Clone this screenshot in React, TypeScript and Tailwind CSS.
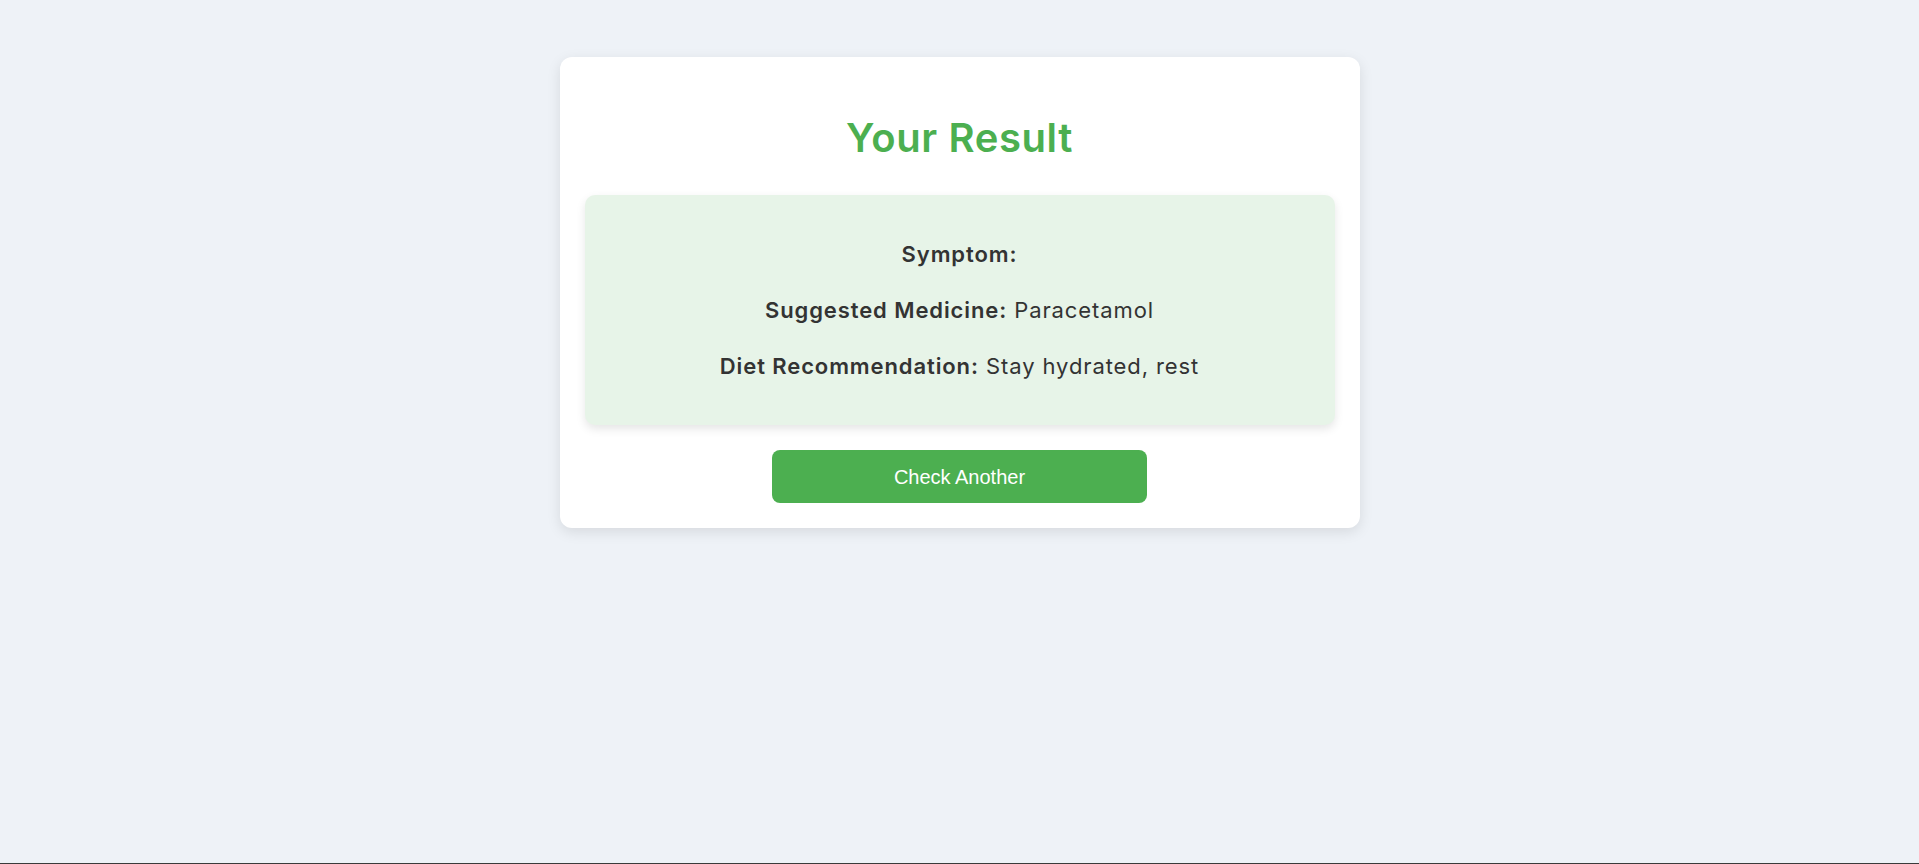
export default function App() {
  const result = {
    symptom: '',
    medicine: 'Paracetamol',
    diet: 'Stay hydrated, rest',
  };

  return (
    <div className="min-h-[864px] flex flex-col bg-[#eef2f7] font-['Inter',sans-serif] text-[#333]">
      <div className="flex-1">
        <div className="mx-auto mt-[57px] w-[800px] rounded-[12px] bg-white p-[25px] shadow-[0_4px_14px_rgba(0,0,0,0.1)]">
          <h2 className="mt-[32px] mb-[33px] text-center text-[40px] font-semibold leading-[48px] tracking-[0.6px] text-[#4caf50]">
            Your Result
          </h2>

          {/* 结果区 */}
          <div className="flex flex-col gap-[22px] rounded-[10px] bg-[#e7f4e8] py-[42px] text-center text-[22px] leading-[34px] tracking-[0.9px] shadow-[0_4px_10px_rgba(0,0,0,0.1)]">
            <p>
              <span className="font-semibold">Symptom:</span> {result.symptom}
            </p>
            <p>
              <span className="font-semibold">Suggested Medicine:</span> {result.medicine}
            </p>
            <p>
              <span className="font-semibold">Diet Recommendation:</span> {result.diet}
            </p>
          </div>

          <div className="mt-[25px] flex justify-center">
            <button className="h-[53px] w-[375px] rounded-[8px] bg-[#4caf50] font-['Liberation_Sans',Arial,sans-serif] text-[20px] text-white hover:bg-[#43a047]">
              Check Another
            </button>
          </div>
        </div>
      </div>
      <div className="h-px bg-[#3a3a3a]" />
    </div>
  );
}
